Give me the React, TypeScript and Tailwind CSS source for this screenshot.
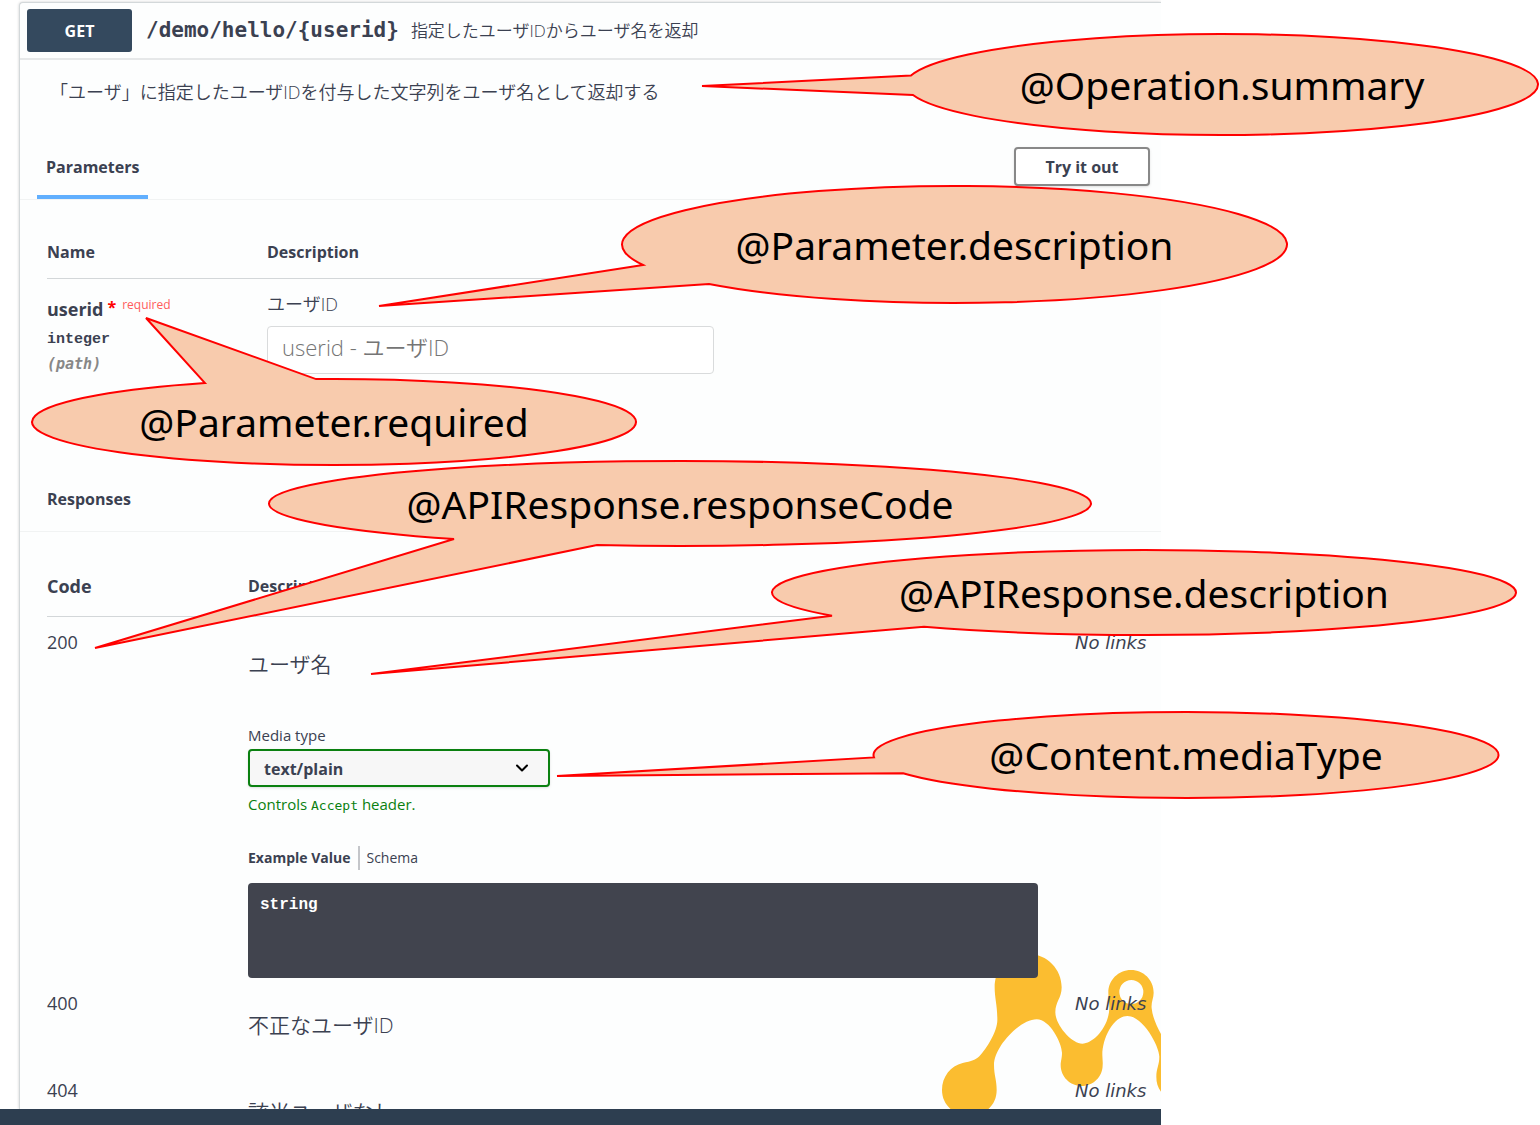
import { ChevronDown } from "lucide-react";

type Side = "top" | "bottom";

type Callout = {
  label: string;
  cx: number;
  cy: number;
  rx: number;
  ry: number;
  tip: [number, number];
  // where the tail leaves the ellipse, clockwise start and end
  from: [number, Side];
  to: [number, Side];
};

const callouts: Callout[] = [
  { label: "@Operation.summary", cx: 1222, cy: 84.5, rx: 316, ry: 50.5, tip: [702, 86], from: [911, "top"], to: [913, "bottom"] },
  { label: "@Parameter.description", cx: 954.5, cy: 244.5, rx: 332.5, ry: 58.5, tip: [379, 306], from: [643, "bottom"], to: [709, "bottom"] },
  { label: "@Parameter.required", cx: 334, cy: 422, rx: 302, ry: 43, tip: [146, 318], from: [316, "top"], to: [205, "top"] },
  { label: "@APIResponse.responseCode", cx: 680, cy: 503.5, rx: 411, ry: 42.5, tip: [95, 648], from: [454, "bottom"], to: [597, "bottom"] },
  { label: "@APIResponse.description", cx: 1144, cy: 592.5, rx: 372, ry: 42.5, tip: [371, 674], from: [832, "bottom"], to: [924, "bottom"] },
  { label: "@Content.mediaType", cx: 1186, cy: 755, rx: 312.5, ry: 43, tip: [557, 776], from: [874, "bottom"], to: [903, "bottom"] },
];

function calloutPath({ cx, cy, rx, ry, tip, from, to }: Callout) {
  const point = ([x, side]: [number, Side]) => {
    const dy = ry * Math.sqrt(Math.max(0, 1 - ((x - cx) / rx) ** 2));
    return `${x} ${side === "top" ? cy - dy : cy + dy}`;
  };
  return `M${tip[0]} ${tip[1]} L${point(from)} A${rx} ${ry} 0 1 1 ${point(to)} Z`;
}

function Callouts() {
  return (
    <svg
      className="pointer-events-none absolute left-0 top-0 h-[810px] w-[1540px]"
      viewBox="0 0 1540 810"
    >
      {callouts.map((c) => (
        <g key={c.label}>
          <path d={calloutPath(c)} className="fill-[#f8cbad] stroke-[#ff0000] stroke-2" />
          <text
            x={c.cx}
            y={c.cy + 15}
            textAnchor="middle"
            className="fill-black font-['Noto_Sans',sans-serif] text-[39px]"
          >
            {c.label}
          </text>
        </g>
      ))}
    </svg>
  );
}

function Logo() {
  return (
    <svg
      className="absolute bottom-0 right-0 h-[159px] w-[221px]"
      viewBox="180 60 663 477"
      aria-hidden="true"
    >
      <path
        fill="#fbbd30"
        fillRule="evenodd"
        d="M344 172 C344 110 390 72 445 72 C502 72 545 118 545 172 C545 205 526 215 526 247 C526 285 575 341 607 341 C640 341 688 290 688 232 C688 215 685 205 685 188 C685 150 715 120 753 120 C791 120 821 150 821 188 C821 205 813 215 815 235 C817 260 830 288 843 312 L843 485 C833 470 829 458 829 440 C829 415 838 405 838 380 C838 350 790 258 742 258 C700 258 667 325 667 375 C667 385 669 395 668 405 C668 440 640 468 605 468 C570 468 542 440 542 405 C542 392 546 385 546 368 C546 340 510 268 470 268 C420 268 342 350 342 405 C342 435 350 450 350 480 C350 505 340 525 322 540 L215 540 C197 525 186 505 186 480 C186 440 212 408 248 399 C275 394 287 390 298 379 C320 355 352 305 352 270 C352 225 344 205 344 172 Z M754 150 A36 36 0 1 0 754 222 A36 36 0 1 0 754 150 Z"
      />
    </svg>
  );
}

function OperationHeader() {
  return (
    <div className="flex h-[57px] items-center border-b-2 border-[#e6e8e9] pl-[7px]">
      <button className="h-[43px] w-[105px] rounded-[3px] bg-[#34495e] text-base font-bold text-white">
        GET
      </button>
      <span className="ml-3.5 font-['DejaVu_Sans_Mono',monospace] text-[21px] font-bold">
        /demo/hello/&#123;userid&#125;
      </span>
      <span className="ml-3 text-[17px] font-[350]">指定したユーザIDからユーザ名を返却</span>
    </div>
  );
}

function Parameters() {
  return (
    <section>
      <div className="flex h-[65px] items-stretch justify-between border-b border-[#f1f3f3] pl-[17px] pr-[11px]">
        <h4 className="flex items-center border-b-4 border-[#61affe] px-[9px] pt-1 text-base font-bold">
          Parameters
        </h4>
        <button className="mt-3 h-[39px] w-[136px] rounded border-2 border-[#888] bg-white text-base font-bold shadow-sm">
          Try it out
        </button>
      </div>

      <div className="pl-[27px] pr-[11px]">
        <table className="w-full table-fixed border-separate border-spacing-0 text-left">
          <thead>
            <tr className="h-[79px] align-bottom text-base leading-6">
              <th className="w-[220px] border-b border-[#d3d7d9] pb-3.5 font-bold">Name</th>
              <th className="border-b border-[#d3d7d9] pb-3.5 font-bold">Description</th>
            </tr>
          </thead>
          <tbody>
            <tr className="h-[187px] align-top">
              <td className="pt-[18px]">
                <div className="text-lg font-bold leading-6">
                  userid
                  <span className="ml-1 align-top text-base leading-5 text-[#ff0000]">*</span>
                  <span className="ml-1.5 align-top text-xs font-normal leading-4 text-[#ff5c5c]">
                    required
                  </span>
                </div>
                <div className="mt-[7px] font-['Liberation_Mono',monospace] text-[15px] font-bold leading-6">
                  integer
                </div>
                <div className="font-['DejaVu_Sans_Mono',monospace] text-[15px] font-bold italic leading-6 text-[#888]">
                  (path)
                </div>
              </td>
              <td className="pt-[13px]">
                <label htmlFor="userid" className="block text-lg font-[350] leading-6">
                  ユーザID
                </label>
                <input
                  id="userid"
                  type="text"
                  placeholder="userid - ユーザID"
                  className="mt-2.5 h-12 w-[447px] rounded border border-[#d9dbdc] bg-white px-3.5 pb-1.5 text-[22px] font-[350] placeholder:text-[#757575]"
                />
              </td>
            </tr>
          </tbody>
        </table>
      </div>
    </section>
  );
}

function ResponseBody() {
  return (
    <>
      <label htmlFor="media-type" className="mt-[49px] block text-[15px] leading-5">
        Media type
      </label>
      <div className="relative mt-1 w-[302px]">
        <select
          id="media-type"
          className="h-[38px] w-full appearance-none rounded border-2 border-[#0a8010] bg-[#f7f7f7] pl-3.5 pr-10 pt-0.5 text-base font-bold shadow-sm"
        >
          <option>text/plain</option>
        </select>
        <ChevronDown
          size={20}
          strokeWidth={2.5}
          className="pointer-events-none absolute right-[18px] top-[9px] text-black"
        />
      </div>
      <p className="mt-[7px] text-[15px] leading-5 text-[#0a8010]">
        Controls <code className="font-['DejaVu_Sans_Mono',monospace] text-[13px]">Accept</code> header.
      </p>
      <div className="mt-[30px] flex h-6 items-center text-sm">
        <button className="h-full border-r-2 border-[#c4c6ca] pr-2 font-bold">Example Value</button>
        <button className="h-full pl-1.5">Schema</button>
      </div>
      <pre className="mt-[13px] h-[95px] rounded bg-[#41444e] px-3 py-2.5 font-['Liberation_Mono',monospace] text-base font-bold text-white">
        string
      </pre>
    </>
  );
}

const responses = [
  { code: "200", description: "ユーザ名", hasBody: true },
  { code: "400", description: "不正なユーザID", hasBody: false },
  { code: "404", description: "該当ユーザなし", hasBody: false },
];

function Responses() {
  return (
    <section>
      <div className="flex h-[66px] items-center border-b border-[#f1f3f3] pl-[27px]">
        <h4 className="text-base font-bold">Responses</h4>
      </div>
      <div className="pl-[27px] pr-[11px]">
        <table className="w-full table-fixed border-separate border-spacing-0 text-left">
          <thead>
            <tr className="h-[85px] align-bottom">
              <th className="w-[201px] border-b border-[#d3d7d9] pb-[18px] text-lg font-bold leading-6">Code</th>
              <th className="border-b border-[#d3d7d9] pb-[18px] text-base font-bold leading-6">Description</th>
              <th className="w-[75px] border-b border-[#d3d7d9]" />
            </tr>
          </thead>
          <tbody>
            {responses.map((r) => (
              <tr key={r.code} className="h-[87px] align-top">
                <td className="pt-[13px] text-lg leading-6">{r.code}</td>
                <td className="pr-[37px] pt-[35px]">
                  <p className="text-[21px] font-[350] leading-6">{r.description}</p>
                  {r.hasBody && <ResponseBody />}
                </td>
                <td className="whitespace-nowrap pt-3.5 font-['DejaVu_Sans',sans-serif] text-lg italic leading-6">
                  No links
                </td>
              </tr>
            ))}
          </tbody>
        </table>
      </div>
    </section>
  );
}

export default function App() {
  return (
    <div className="relative h-screen overflow-hidden bg-white font-['Open_Sans','Noto_Sans_CJK_JP',sans-serif] text-[#3b4151]">
      <div className="mr-[379px] flex h-full flex-col">
        <main className="relative min-h-0 flex-1 overflow-hidden pl-[19px] pt-0.5">
          <div className="relative h-full rounded-tl border-l border-t border-[#d3d8da] bg-[#fdfefe] shadow-[0_0_3px_rgba(0,0,0,0.2)]">
            <Logo />
            <div className="relative">
              <OperationHeader />
              <p className="h-[75px] pl-[30px] pt-5 text-lg font-[350] leading-6">
                「ユーザ」に指定したユーザIDを付与した文字列をユーザ名として返却する
              </p>
              <Parameters />
              <Responses />
            </div>
          </div>
        </main>
        <footer className="h-4 shrink-0 bg-[#2d3e50]" />
      </div>
      <Callouts />
    </div>
  );
}
